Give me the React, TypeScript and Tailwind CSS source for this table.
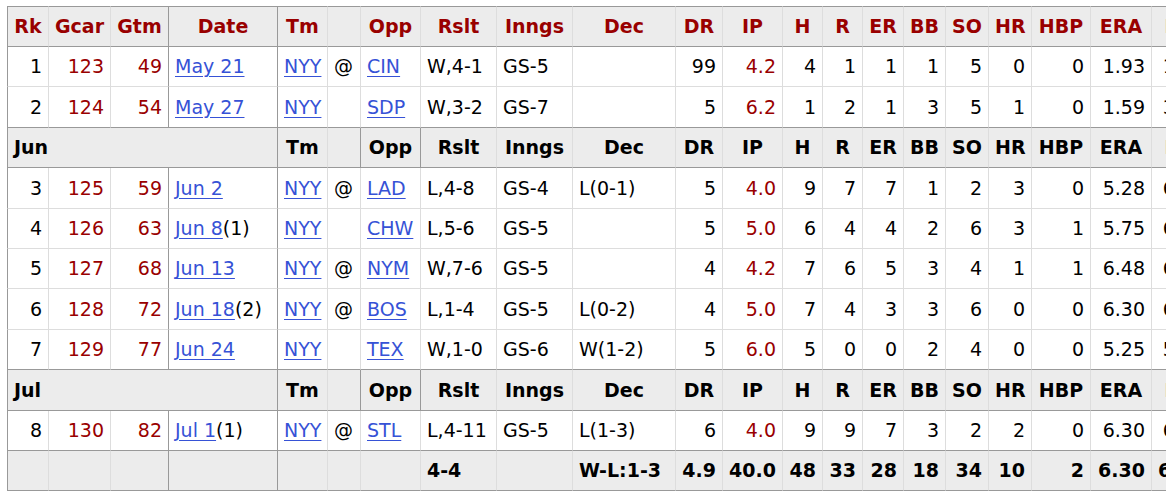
type Row =
  | { kind: "head"; label?: string }
  | { kind: "data"; v: string[]; date: string; note?: string }
  | { kind: "sum"; v: string[] };

const HEAD = ["Rk", "Gcar", "Gtm", "Date", "Tm", "", "Opp", "Rslt", "Inngs", "Dec", "DR", "IP", "H", "R", "ER", "BB", "SO", "HR", "HBP", "ERA", "FIP"];

// v: rk, gcar, gtm, tm, at, opp, rslt, inngs, dec, dr, ip, h, r, er, bb, so, hr, hbp, era, fip
const rows: Row[] = [
  { kind: "head" },
  { kind: "data", date: "May 21", v: ["1", "123", "49", "NYY", "@", "CIN", "W,4-1", "GS-5", "", "99", "4.2", "4", "1", "1", "1", "5", "0", "0", "1.93", "1.95"] },
  { kind: "data", date: "May 27", v: ["2", "124", "54", "NYY", "", "SDP", "W,3-2", "GS-7", "", "5", "6.2", "1", "2", "1", "3", "5", "1", "0", "1.59", "3.04"] },
  { kind: "head", label: "Jun" },
  { kind: "data", date: "Jun 2", v: ["3", "125", "59", "NYY", "@", "LAD", "L,4-8", "GS-4", "L(0-1)", "5", "4.0", "9", "7", "7", "1", "2", "3", "0", "5.28", "6.12"] },
  { kind: "data", date: "Jun 8", note: "(1)", v: ["4", "126", "63", "NYY", "", "CHW", "L,5-6", "GS-5", "", "5", "5.0", "6", "4", "4", "2", "6", "3", "1", "5.75", "6.88"] },
  { kind: "data", date: "Jun 13", v: ["5", "127", "68", "NYY", "@", "NYM", "W,7-6", "GS-5", "", "4", "4.2", "7", "6", "5", "3", "4", "1", "1", "6.48", "6.71"] },
  { kind: "data", date: "Jun 18", note: "(2)", v: ["6", "128", "72", "NYY", "@", "BOS", "L,1-4", "GS-5", "L(0-2)", "4", "5.0", "7", "4", "3", "3", "6", "0", "0", "6.30", "6.02"] },
  { kind: "data", date: "Jun 24", v: ["7", "129", "77", "NYY", "", "TEX", "W,1-0", "GS-6", "W(1-2)", "5", "6.0", "5", "0", "0", "2", "4", "0", "0", "5.25", "5.41"] },
  { kind: "head", label: "Jul" },
  { kind: "data", date: "Jul 1", note: "(1)", v: ["8", "130", "82", "NYY", "@", "STL", "L,4-11", "GS-5", "L(1-3)", "6", "4.0", "9", "9", "7", "3", "2", "2", "0", "6.30", "6.10"] },
  { kind: "sum", v: ["", "", "", "", "", "", "4-4", "", "W-L:1-3", "4.9", "40.0", "48", "33", "28", "18", "34", "10", "2", "6.30", "6.05"] },
];

const RED = "text-[#990000]";
const LINK = "text-[#3652d6] underline underline-offset-[3px]";

// alignment per stats index (after date): tm .. fip
const leftCols = new Set([3, 4, 5, 6, 7, 8]);

export default function App() {
  const cell = "px-[6px] whitespace-nowrap border-r border-b";
  return (
    <div className="w-full h-[494px] overflow-hidden bg-white pl-[7px] pt-[6px]" style={{ fontFamily: '"DejaVu Sans", Verdana, sans-serif' }}>
      <table className="table-fixed w-[1205px] border-separate border-spacing-0 text-[19px] text-black">
        <colgroup>
          <col className="w-[42px]" />
          <col className="w-[62px]" />
          <col className="w-[58px]" />
          <col className="w-[109px]" />
          <col className="w-[50px]" />
          <col className="w-[33px]" />
          <col className="w-[60px]" />
          <col className="w-[76px]" />
          <col className="w-[76px]" />
          <col className="w-[103px]" />
          <col className="w-[47px]" />
          <col className="w-[60px]" />
          <col className="w-[40px]" />
          <col className="w-[40px]" />
          <col className="w-[41px]" />
          <col className="w-[42px]" />
          <col className="w-[43px]" />
          <col className="w-[43px]" />
          <col className="w-[59px]" />
          <col className="w-[61px]" />
          <col className="w-[60px]" />
        </colgroup>
        <tbody>
          {rows.map((row, ri) => {
            const next = rows[ri + 1];
            const darkBottom = row.kind !== "data" || !next || next.kind !== "data";
            const bb = darkBottom ? "border-b-[#999]" : "border-b-[#ddd]";
            const bt = ri === 0 ? "border-t border-t-[#999]" : "";
            const base = ri === 0 ? `${cell} h-[41px]` : `${cell} h-[40.4px]`;

            if (row.kind === "head") {
              const top = !row.label;
              const txt = top ? `font-bold ${RED}` : "font-bold";
              return (
                <tr key={ri} className="bg-[#ececec]">
                  {top ? (
                    HEAD.slice(0, 4).map((h, ci) => (
                      <th key={ci} className={`${base} ${bb} ${bt} ${txt} text-center ${ci === 0 ? "border-l border-l-[#999]" : ""} ${ci >= 2 ? "border-r-[#999]" : "border-r-[#ddd]"}`}>
                        {h}
                      </th>
                    ))
                  ) : (
                    <th colSpan={4} className={`${base} ${bb} ${txt} text-left border-l border-l-[#999] border-r-[#999]`}>
                      {row.label}
                    </th>
                  )}
                  {HEAD.slice(4).map((h, i) => {
                    const ci = i + 4;
                    const dark = !top && (ci === 5 || ci === 6);
                    return (
                      <th key={ci} className={`${base} ${bb} ${bt} ${txt} text-center ${dark ? "border-r-[#999]" : "border-r-[#ddd]"}`}>
                        {h}
                      </th>
                    );
                  })}
                </tr>
              );
            }

            const sum = row.kind === "sum";
            const v = row.v;
            return (
              <tr key={ri} className={sum ? "bg-[#ececec] font-bold" : ""}>
                <td className={`${base} ${bb} text-right border-l border-l-[#999] border-r-[#ddd]`}>{v[0]}</td>
                <td className={`${base} ${bb} text-right border-r-[#ddd] ${RED}`}>{v[1]}</td>
                <td className={`${base} ${bb} text-right border-r-[#999] ${RED}`}>{v[2]}</td>
                <td className={`${base} ${bb} text-left border-r-[#999]`}>
                  {row.kind === "data" && (
                    <>
                      <span className={LINK}>{row.date}</span>
                      {row.note}
                    </>
                  )}
                </td>
                {v.slice(3).map((val, i) => {
                  const si = i + 3;
                  const left = leftCols.has(si);
                  const link = !sum && (si === 3 || si === 5);
                  const red = !sum && si === 10;
                  return (
                    <td key={si} className={`${base} ${bb} border-r-[#ddd] ${left ? "text-left" : "text-right"} ${red ? RED : ""}`}>
                      {link ? <span className={LINK}>{val}</span> : val}
                    </td>
                  );
                })}
              </tr>
            );
          })}
        </tbody>
      </table>
    </div>
  );
}
